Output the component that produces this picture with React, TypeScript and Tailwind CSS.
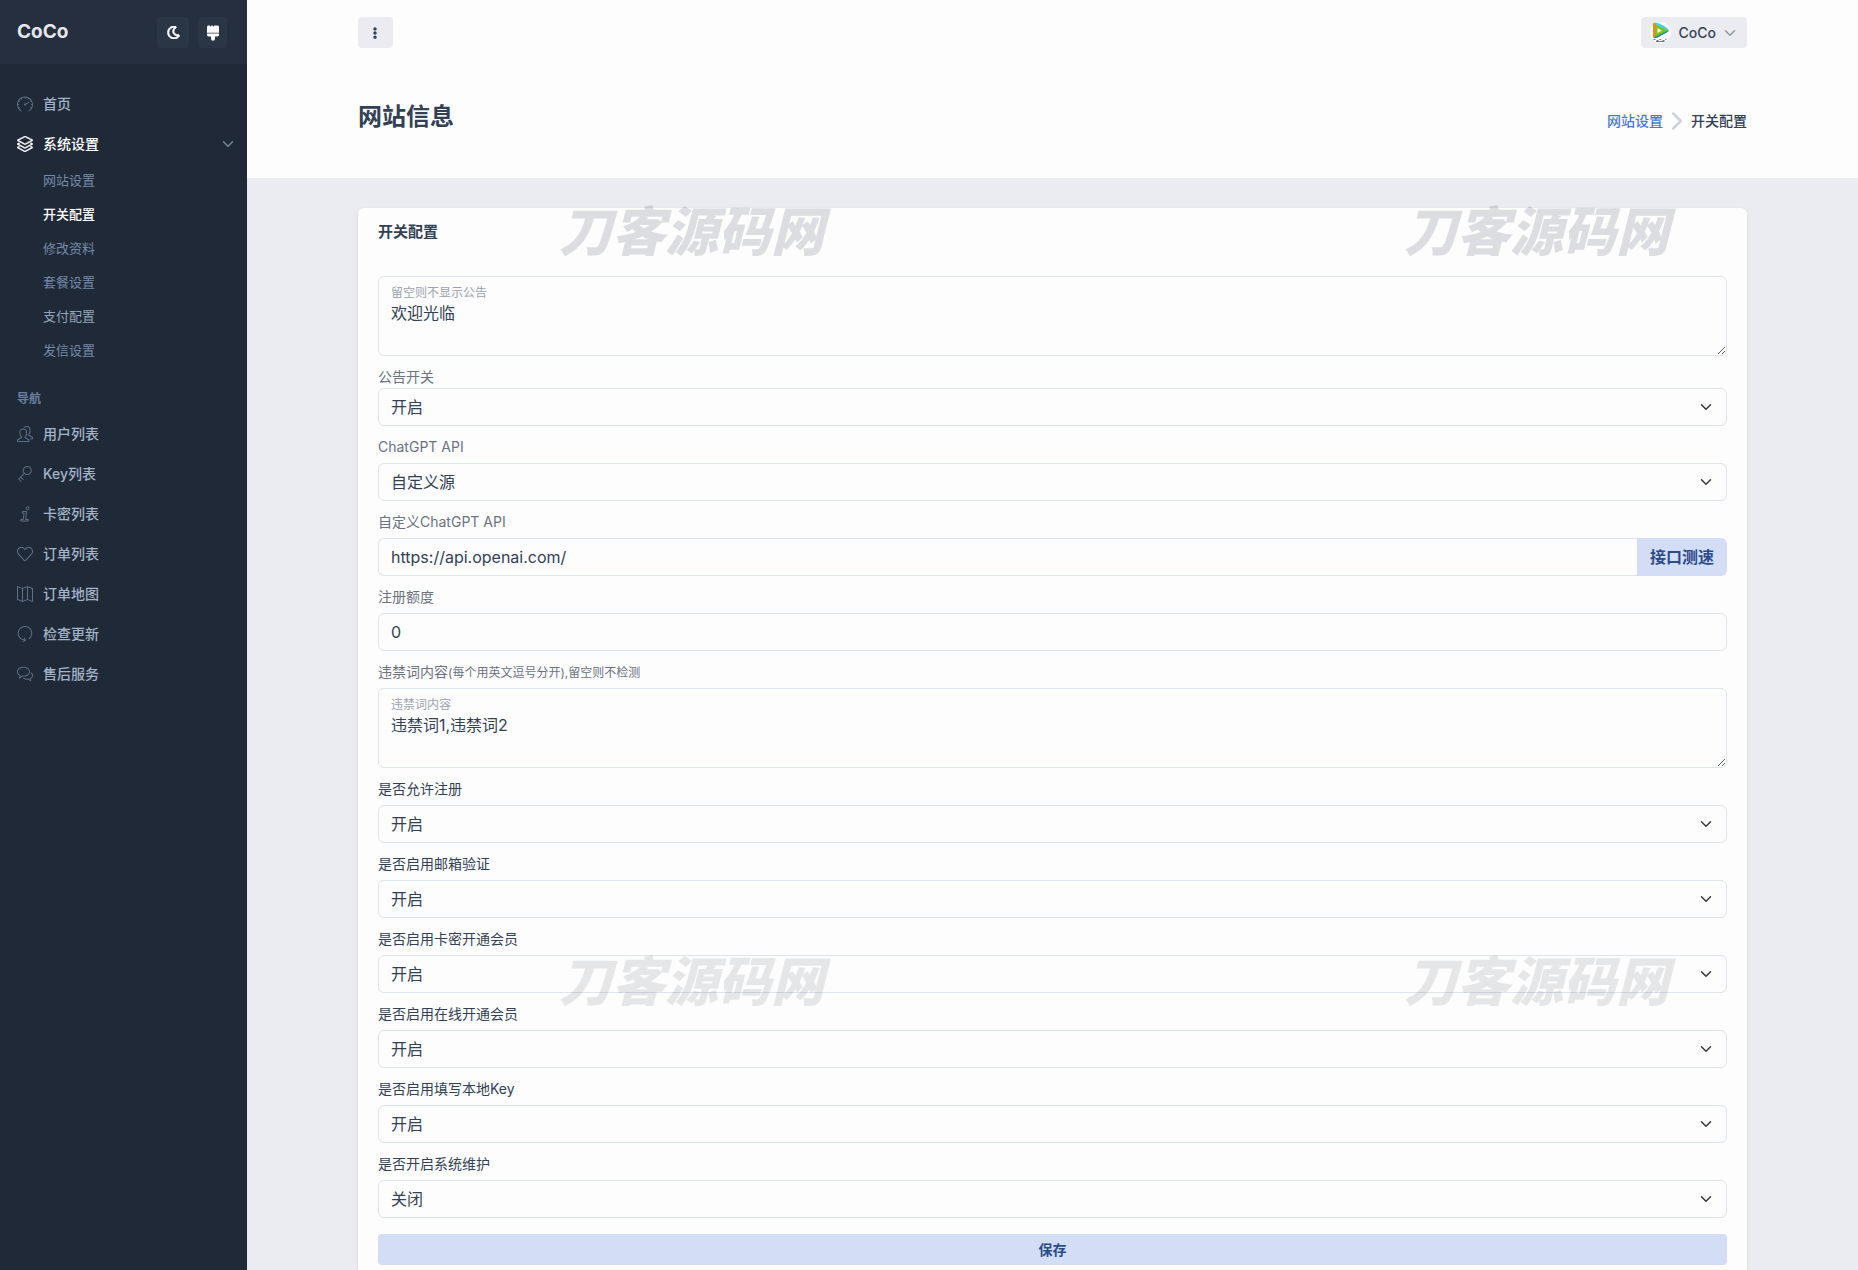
import React from "react";
import {
  SlSpeedometer,
  SlLayers,
  SlPeople,
  SlKey,
  SlHeart,
  SlMap,
  SlReload,
  SlBubbles,
} from "react-icons/sl";
import { FaRegMoon, FaEllipsisV } from "react-icons/fa";

function InfoItalic({ className }: { className?: string }) {
  return (
    <svg viewBox="0 0 16 16" fill="none" stroke="currentColor" strokeWidth="1" strokeLinejoin="round" className={className} aria-hidden="true">
      <circle cx="10.500" cy="2.200" r="1.500" />
      <path d="M5.500 5.500h4.200L8.500 13.500h2.800v1.500H3.800v-1.500h2.400L7.200 7H5.200z" />
    </svg>
  );
}

function Brush({ className }: { className?: string }) {
  return (
    <svg viewBox="0 0 16 16" fill="currentColor" className={className} aria-hidden="true">
      <path d="M2 1.500 3 .5h2l.7 1.500L6.500.5h1.300l.7 1.500.8-1.500H13l1 1v6.300H2z" />
      <path d="M2 8.600h12v1.200c0 1-.7 1.700-1.700 1.700H10v2.300a2 2 0 0 1-4 0v-2.300H3.700C2.700 11.500 2 10.800 2 9.800z" />
    </svg>
  );
}

const subItems = [
  { label: "网站设置", tone: "text-[#7689a8]" },
  { label: "开关配置", tone: "text-white font-medium" },
  { label: "修改资料", tone: "text-[#7689a8]" },
  { label: "套餐设置", tone: "text-[#7689a8]" },
  { label: "支付配置", tone: "text-[#94a3b8]" },
  { label: "发信设置", tone: "text-[#7689a8]" },
];

const navItems = [
  { label: "用户列表", Icon: SlPeople },
  { label: "Key列表", Icon: SlKey },
  { label: "卡密列表", Icon: InfoItalic },
  { label: "订单列表", Icon: SlHeart },
  { label: "订单地图", Icon: SlMap },
  { label: "检查更新", Icon: SlReload },
  { label: "售后服务", Icon: SlBubbles },
];

function Chevron({ className }: { className: string }) {
  return (
    <svg viewBox="0 0 16 16" fill="none" stroke="currentColor" strokeLinecap="round" strokeLinejoin="round" className={className} aria-hidden="true">
      <path d="m2 5 6 6 6-6" strokeWidth="2" />
    </svg>
  );
}

function Avatar() {
  return (
    <svg viewBox="0 0 21 21" className="size-[21px]" aria-hidden="true">
      <circle cx="10.500" cy="10.500" r="10.500" fill="#fff" />
      <path d="M3 2.500C3 1 4.500.3 6 1.200l11.500 6c1.400.8 1.400 1.900 0 2.700L6 16C4.500 16.700 3 16 3 14.500z" fill="#7cc41c" />
      <path d="M4.500 1C6 .6 7.500 1 9 1.500c3 1 6 2.800 9 5.500.6.600.8 1.200.5 1.800L12.500 6 6 2.800z" fill="#45cfe8" />
      <path d="M18.600 8.300c0 .8-.4 1.300-1.100 1.700L8.500 15c-1.500.8-3.500 1.300-4.800.6L13 11z" fill="#1c86b0" />
      <path d="M3 3c0-1 .6-1.700 1.300-2L6 3.500 5.600 12 4 15.500c-.6-.2-1-.5-1-1z" fill="#f08a12" />
      <path d="M7.500 6v5l4.200-2.500z" fill="#fff" />
      <path d="M3.500 17.500h2m1 1h2m.8-.9h2m1.200.9h2m.5-1.200h1.500M6 19.500h8.500" stroke="#777" strokeWidth="1" fill="none" />
    </svg>
  );
}

function Sidebar() {
  return (
    <aside className="flex w-[247px] shrink-0 flex-col bg-[#1f2937]">
      <div className="flex h-16 items-center bg-[#252f3f] pt-px pr-5 pl-[17px]">
        <a href="#" className="flex-1 text-[19px] font-bold text-[#e5e7eb]">CoCo</a>
        <button aria-label="深色模式" className="mr-[9px] flex h-[31px] w-8 items-center justify-center rounded bg-[#2a3546] text-white">
          <FaRegMoon className="size-[13px]" strokeWidth="36" />
        </button>
        <button aria-label="主题" className="flex h-[31px] w-[29px] items-center justify-center rounded bg-[#2a3546] text-white">
          <Brush className="size-4" />
        </button>
      </div>
      <nav className="pt-5 text-sm font-medium text-[#a3b3c9]">
        <a href="#" className="flex h-10 items-center pl-[17px]">
          <SlSpeedometer className="mr-2.5 size-4 text-[#5f6f85]" />
          首页
        </a>
        <a href="#" className="flex h-10 items-center pr-[13px] pl-[17px] text-white">
          <SlLayers className="mr-2.5 size-4" strokeWidth="30" stroke="currentColor" />
          <span className="flex-1">系统设置</span>
          <Chevron className="size-3 text-[#75859c]" />
        </a>
        <ul className="pb-5 text-[13px] font-normal">
          {subItems.map((s) => (
            <li key={s.label}>
              <a href="#" className={`flex h-[34px] items-center pb-0.5 pl-[43px] ${s.tone}`}>{s.label}</a>
            </li>
          ))}
        </ul>
        <h2 className="flex h-[22px] items-center pl-[17px] text-xs font-semibold text-[#6b7f9f]">导航</h2>
        <ul className="pt-1">
          {navItems.map(({ label, Icon }) => (
            <li key={label}>
              <a href="#" className="flex h-10 items-center pl-[17px]">
                <Icon className="mr-2.5 size-4 text-[#5f6f85]" />
                {label}
              </a>
            </li>
          ))}
        </ul>
      </nav>
    </aside>
  );
}

const field = "block w-full rounded-md border border-[#dfe3ea] bg-[#fdfdfd] text-base text-[#334155] outline-none";

function Label({ htmlFor, muted, tight, children }: { htmlFor: string; muted?: boolean; tight?: boolean; children: React.ReactNode }) {
  return (
    <label
      htmlFor={htmlFor}
      className={`mt-2.5 block text-sm ${tight ? "leading-[22px]" : "mb-1.5 leading-[21px]"} ${muted ? "text-[#6b7280]" : "text-[#334155]"}`}
    >
      {children}
    </label>
  );
}

function Select({ id, value }: { id: string; value: string }) {
  return (
    <div className="relative">
      <select id={id} defaultValue={value} className={`${field} h-[38px] appearance-none px-3`}>
        <option>{value}</option>
        <option>{value === "开启" ? "关闭" : "开启"}</option>
      </select>
      <Chevron className="pointer-events-none absolute top-[13px] right-[15px] size-3 text-[#343a40]" />
    </div>
  );
}

function FloatingArea({ id, label, value }: { id: string; label: string; value: string }) {
  return (
    <div className="relative">
      <textarea id={id} defaultValue={value} className={`${field} h-20 resize-y px-3 pt-6 leading-6`} />
      <label htmlFor={id} className="absolute top-[9px] left-[13px] text-xs leading-4 text-[#9ca3af]">{label}</label>
    </div>
  );
}

const switches = [
  { id: "register", label: "是否允许注册", value: "开启" },
  { id: "mail", label: "是否启用邮箱验证", value: "开启" },
  { id: "card", label: "是否启用卡密开通会员", value: "开启" },
  { id: "online", label: "是否启用在线开通会员", value: "开启" },
  { id: "localkey", label: "是否启用填写本地Key", value: "开启" },
  { id: "maintain", label: "是否开启系统维护", value: "关闭" },
];

const marks = [
  "top-[202px] left-[312px] text-[#374151]/17",
  "top-[202px] left-[1157px] text-[#374151]/17",
  "top-[952px] left-[312px] text-[#374151]/12",
  "top-[952px] left-[1157px] text-[#374151]/12",
];

export default function App() {
  return (
    <div className="flex h-screen overflow-hidden bg-[#ebecf1] font-['Inter','Noto_Sans_CJK_SC',sans-serif] text-[#334155]">
      <Sidebar />
      <div className="relative min-w-0 flex-1 overflow-hidden">
        <div className="bg-[#fdfdfd] px-[111px]">
          <header className="flex h-16 items-center justify-between pt-px">
            <button aria-label="更多" className="flex h-[31px] w-[35px] items-center justify-center rounded bg-[#ebecf1] pr-0.5 text-[#334155]">
              <FaEllipsisV className="size-3" />
            </button>
            <button className="flex h-[31px] items-center rounded bg-[#ebecf1] pr-[11px] pl-[9px] text-sm font-medium">
              <Avatar />
              <span className="mr-2 ml-2">CoCo</span>
              <Chevron className="size-3 text-[#8b96a6]" />
            </button>
          </header>
          <div className="flex h-[114px] items-center justify-between">
            <h1 className="pb-2 text-2xl font-bold">网站信息</h1>
            <nav className="flex items-center text-sm font-medium">
              <a href="#" className="text-[#4a76e0]">网站设置</a>
              <Chevron className="mx-1 size-5 -rotate-90 text-[#ced4da]" />
              <span>开关配置</span>
            </nav>
          </div>
        </div>
        <main className="px-[111px] pt-[30px]">
          <section className="rounded-md bg-[#fdfdfd] px-5 pb-2.5 shadow-sm">
            <h2 className="flex h-12 items-center text-[15px] font-semibold">开关配置</h2>
            <form className="pt-5">
              <FloatingArea id="notice" label="留空则不显示公告" value="欢迎光临" />
              <Label htmlFor="noticeOn" muted tight>公告开关</Label>
              <Select id="noticeOn" value="开启" />
              <Label htmlFor="api" muted>ChatGPT API</Label>
              <Select id="api" value="自定义源" />
              <Label htmlFor="url" muted>自定义ChatGPT API</Label>
              <div className="flex">
                <input id="url" defaultValue="https://api.openai.com/" className={`${field} h-[38px] flex-1 rounded-r-none border-r-0 px-3`} />
                <button type="button" className="h-[38px] shrink-0 rounded-r-md bg-[#d3def6] px-[13px] text-base font-semibold text-[#2c4a8a]">接口测速</button>
              </div>
              <Label htmlFor="quota" muted>注册额度</Label>
              <input id="quota" defaultValue="0" className={`${field} h-[38px] px-3`} />
              <Label htmlFor="words" muted>
                违禁词内容<span className="text-xs">(每个用英文逗号分开),留空则不检测</span>
              </Label>
              <FloatingArea id="words" label="违禁词内容" value="违禁词1,违禁词2" />
              {switches.map((s) => (
                <React.Fragment key={s.id}>
                  <Label htmlFor={s.id}>{s.label}</Label>
                  <Select id={s.id} value={s.value} />
                </React.Fragment>
              ))}
              <button type="button" className="mt-4 h-[31px] w-full rounded bg-[#d3def6] text-sm font-semibold text-[#2c4a8a]">保存</button>
            </form>
          </section>
        </main>
        {marks.map((m) => (
          <span key={m} aria-hidden="true" className={`pointer-events-none absolute text-[53px] leading-[60px] font-black whitespace-nowrap italic ${m}`}>刀客源码网</span>
        ))}
      </div>
    </div>
  );
}
